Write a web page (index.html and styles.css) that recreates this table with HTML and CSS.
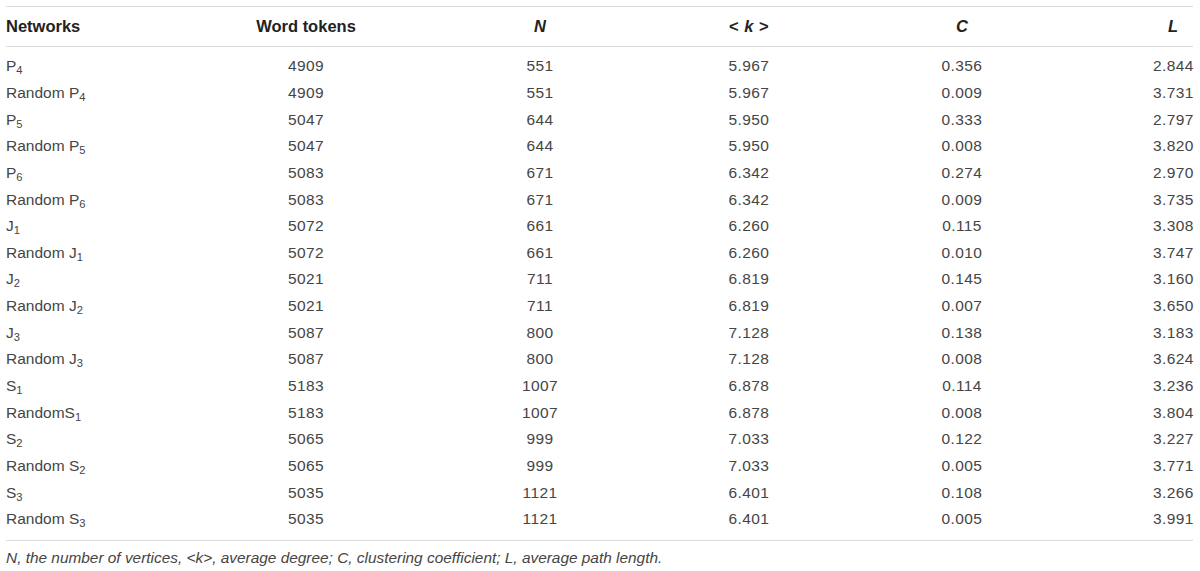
FILE: index.html
```html
<!DOCTYPE html>
<html>
<head>
<meta charset="utf-8">
<link rel="stylesheet" href="styles.css">
</head>
<body>
<div class="wrap">
  <div class="table">
    <div class="row head">
      <div class="c c1">Networks</div>
      <div class="c c2">Word tokens</div>
      <div class="c c3"><i>N</i></div>
      <div class="c c4">&lt; <i>k</i> &gt;</div>
      <div class="c c5"><i>C</i></div>
      <div class="c c6"><i>L</i></div>
    </div>
    <div class="body">
      <div class="row"><div class="c c1">P<sub>4</sub></div><div class="c c2">4909</div><div class="c c3">551</div><div class="c c4">5.967</div><div class="c c5">0.356</div><div class="c c6">2.844</div></div>
      <div class="row"><div class="c c1">Random P<sub>4</sub></div><div class="c c2">4909</div><div class="c c3">551</div><div class="c c4">5.967</div><div class="c c5">0.009</div><div class="c c6">3.731</div></div>
      <div class="row"><div class="c c1">P<sub>5</sub></div><div class="c c2">5047</div><div class="c c3">644</div><div class="c c4">5.950</div><div class="c c5">0.333</div><div class="c c6">2.797</div></div>
      <div class="row"><div class="c c1">Random P<sub>5</sub></div><div class="c c2">5047</div><div class="c c3">644</div><div class="c c4">5.950</div><div class="c c5">0.008</div><div class="c c6">3.820</div></div>
      <div class="row"><div class="c c1">P<sub>6</sub></div><div class="c c2">5083</div><div class="c c3">671</div><div class="c c4">6.342</div><div class="c c5">0.274</div><div class="c c6">2.970</div></div>
      <div class="row"><div class="c c1">Random P<sub>6</sub></div><div class="c c2">5083</div><div class="c c3">671</div><div class="c c4">6.342</div><div class="c c5">0.009</div><div class="c c6">3.735</div></div>
      <div class="row"><div class="c c1">J<sub>1</sub></div><div class="c c2">5072</div><div class="c c3">661</div><div class="c c4">6.260</div><div class="c c5">0.115</div><div class="c c6">3.308</div></div>
      <div class="row"><div class="c c1">Random J<sub>1</sub></div><div class="c c2">5072</div><div class="c c3">661</div><div class="c c4">6.260</div><div class="c c5">0.010</div><div class="c c6">3.747</div></div>
      <div class="row"><div class="c c1">J<sub>2</sub></div><div class="c c2">5021</div><div class="c c3">711</div><div class="c c4">6.819</div><div class="c c5">0.145</div><div class="c c6">3.160</div></div>
      <div class="row"><div class="c c1">Random J<sub>2</sub></div><div class="c c2">5021</div><div class="c c3">711</div><div class="c c4">6.819</div><div class="c c5">0.007</div><div class="c c6">3.650</div></div>
      <div class="row"><div class="c c1">J<sub>3</sub></div><div class="c c2">5087</div><div class="c c3">800</div><div class="c c4">7.128</div><div class="c c5">0.138</div><div class="c c6">3.183</div></div>
      <div class="row"><div class="c c1">Random J<sub>3</sub></div><div class="c c2">5087</div><div class="c c3">800</div><div class="c c4">7.128</div><div class="c c5">0.008</div><div class="c c6">3.624</div></div>
      <div class="row"><div class="c c1">S<sub>1</sub></div><div class="c c2">5183</div><div class="c c3">1007</div><div class="c c4">6.878</div><div class="c c5">0.114</div><div class="c c6">3.236</div></div>
      <div class="row"><div class="c c1">RandomS<sub>1</sub></div><div class="c c2">5183</div><div class="c c3">1007</div><div class="c c4">6.878</div><div class="c c5">0.008</div><div class="c c6">3.804</div></div>
      <div class="row"><div class="c c1">S<sub>2</sub></div><div class="c c2">5065</div><div class="c c3">999</div><div class="c c4">7.033</div><div class="c c5">0.122</div><div class="c c6">3.227</div></div>
      <div class="row"><div class="c c1">Random S<sub>2</sub></div><div class="c c2">5065</div><div class="c c3">999</div><div class="c c4">7.033</div><div class="c c5">0.005</div><div class="c c6">3.771</div></div>
      <div class="row"><div class="c c1">S<sub>3</sub></div><div class="c c2">5035</div><div class="c c3">1121</div><div class="c c4">6.401</div><div class="c c5">0.108</div><div class="c c6">3.266</div></div>
      <div class="row"><div class="c c1">Random S<sub>3</sub></div><div class="c c2">5035</div><div class="c c3">1121</div><div class="c c4">6.401</div><div class="c c5">0.005</div><div class="c c6">3.991</div></div>
    </div>
  </div>
  <p class="note"><i>N</i>, the number of vertices, &lt;<i>k</i>&gt;, average degree; <i>C</i>, clustering coefficient; <i>L</i>, average path length.</p>
</div>
</body>
</html>
```
FILE: styles.css
```css
html, body {
  margin: 0;
  padding: 0;
  background: #ffffff;
}
body {
  font-family: "Liberation Sans", Arial, sans-serif;
  color: #454545;
}
.wrap {
  padding: 6px 7px 0 6px;
}
.table {
  border-top: 1px solid #dcdcdc;
  border-bottom: 1px solid #dcdcdc;
}
.row {
  display: grid;
  grid-template-columns: 194px 212px 256px 162px 264px 99px;
  align-items: center;
  height: 26.65px;
  font-size: 15.5px;
}
.row.head {
  height: 39px;
  font-size: 16.5px;
  font-weight: bold;
  color: #222222;
  border-bottom: 1px solid #dcdcdc;
}
.head .c4 {
  letter-spacing: 0.5px;
}
.body {
  padding: 6px 0 7px;
}
.c {
  text-align: center;
  white-space: nowrap;
}
.c1 {
  text-align: left;
}
.body .c2, .body .c3, .body .c4, .body .c5, .body .c6 {
  letter-spacing: 0.4px;
}
.c6 {
  padding-left: 59px;
}
sub {
  font-size: 0.72em;
  vertical-align: -0.3em;
  line-height: 0;
}
.note {
  margin: 0;
  padding-top: 8px;
  font-size: 15.4px;
  font-style: italic;
  color: #454545;
}
```
